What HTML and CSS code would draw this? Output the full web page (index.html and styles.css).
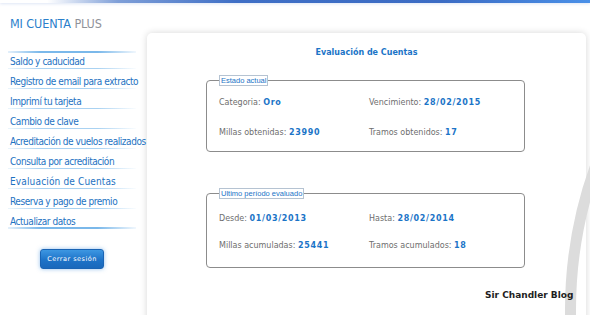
FILE: index.html
```html
<!DOCTYPE html>
<html lang="es">
<head>
<meta charset="utf-8">
<title>Mi Cuenta Plus</title>
<link rel="stylesheet" href="styles.css">
</head>
<body>
<div class="topbar"></div>
<div class="layout">
  <aside class="sidebar">
    <h1 class="brand"><span class="brand-main">MI CUENTA</span> <span class="brand-plus">PLUS</span></h1>
    <ul class="menu">
      <li class="menu-item">Saldo y caducidad</li>
      <li class="menu-item">Registro de email para extracto</li>
      <li class="menu-item">Imprimí tu tarjeta</li>
      <li class="menu-item">Cambio de clave</li>
      <li class="menu-item">Acreditación de vuelos realizados</li>
      <li class="menu-item">Consulta por acreditación</li>
      <li class="menu-item active">Evaluación de Cuentas</li>
      <li class="menu-item">Reserva y pago de premio</li>
      <li class="menu-item last">Actualizar datos</li>
    </ul>
    <div class="logout-wrap"><button class="logout">Cerrar sesión</button></div>
  </aside>
  <main class="panel">
    <h2 class="panel-title">Evaluación de Cuentas</h2>
    <fieldset class="box">
      <legend class="box-legend">Estado actual</legend>
      <div class="grid">
        <div class="cell">Categoria: <b class="val">Oro</b></div>
        <div class="cell">Vencimiento: <b class="val">28/02/2015</b></div>
        <div class="cell">Millas obtenidas: <b class="val">23990</b></div>
        <div class="cell">Tramos obtenidos: <b class="val">17</b></div>
      </div>
    </fieldset>
    <fieldset class="box box-second">
      <legend class="box-legend">Ultimo período evaluado</legend>
      <div class="grid">
        <div class="cell">Desde: <b class="val">01/03/2013</b></div>
        <div class="cell">Hasta: <b class="val">28/02/2014</b></div>
        <div class="cell">Millas acumuladas: <b class="val">25441</b></div>
        <div class="cell">Tramos acumulados: <b class="val">18</b></div>
      </div>
    </fieldset>
  </main>
</div>
<svg class="ring" width="40" height="160" viewBox="0 0 40 160" aria-hidden="true">
  <circle cx="447" cy="150" r="426.5" fill="none" stroke="#dcdcdc" stroke-width="11"/>
</svg>
<div class="watermark">Sir Chandler Blog</div>
</body>
</html>
```

FILE: styles.css
```css
* { box-sizing: border-box; }
html, body { margin: 0; padding: 0; background: #fff; overflow: hidden; }
body { width: 590px; height: 315px; position: relative; }

.topbar {
  height: 3px;
  background: linear-gradient(to right, rgba(255,255,255,0) 8%, #7f9fd8 20%, #3f6fc6 40%, #3c6cc4 75%, #4a90e8 100%);
  box-shadow: 0 1px 3px rgba(70,110,200,0.18);
}

.layout { display: flex; align-items: flex-start; }

.sidebar { width: 140px; padding: 13px 0 0 0; flex: none; }

.brand {
  margin: 0 0 0 10px;
  font: normal 12.5px/16px "DejaVu Sans Condensed", "DejaVu Sans", sans-serif;
  letter-spacing: -0.1px;
}
.brand-main { color: #2b7fcb; }
.brand-plus { color: #8f9299; }

.menu { list-style: none; margin: 17px 0 0 0; padding: 0; position: relative; }
.menu::before {
  content: "";
  position: absolute; left: 8px; top: 2px; width: 128px; height: 2px;
  background: linear-gradient(to right, rgba(120,180,235,0.2), #7ab8ea 25%, #7ab8ea 70%, rgba(120,180,235,0.1));
}
.menu-item {
  position: relative;
  height: 20px;
  padding: 6px 0 0 10px;
  font: 10px/14px "DejaVu Sans Condensed", "DejaVu Sans", sans-serif;
  letter-spacing: -0.45px;
  color: #1d72c2;
  white-space: nowrap;
}
.menu-item:first-child { margin-top: 3px; }
.menu-item::after {
  content: "";
  position: absolute; left: 8px; bottom: 0; width: 128px; height: 1px;
  background: linear-gradient(to right, rgba(160,205,240,0.2), #a9d2f2 25%, #a9d2f2 70%, rgba(160,205,240,0.05));
}
.menu-item.last::after {
  height: 2px;
  background: linear-gradient(to right, rgba(120,180,235,0.2), #7ab8ea 25%, #7ab8ea 70%, rgba(120,180,235,0.1));
}
.menu-item.active { letter-spacing: 0.15px; }

.logout-wrap { padding: 18px 0 0 40px; }
.logout {
  width: 64px; height: 20px;
  padding: 0;
  border: 1px solid #1a64b4;
  border-radius: 3px;
  background: linear-gradient(#3d97e2, #1e73c8 55%, #1a68bb);
  color: #fff;
  font: 6.5px/18px "DejaVu Sans", sans-serif;
  letter-spacing: 0.5px;
  box-shadow: 0 0 4px rgba(60,140,220,0.55);
}

.panel {
  margin: 30px 0 0 7px;
  width: 439px;
  height: 300px;
  background: #fff;
  border-radius: 5px 5px 0 0;
  box-shadow: 0 0 7px rgba(0,0,0,0.16);
  padding-top: 15px;
  flex: none;
}
.panel-title {
  margin: 0 0 17px 0;
  text-align: center;
  font: bold 8px/10px "DejaVu Sans", sans-serif;
  color: #1b74c7;
}

.box {
  width: 319px;
  margin: 0 0 0 59px;
  border: 1px solid #8c8c8c;
  border-radius: 4px;
  padding: 11px 11px 12px 12px;
  min-width: 0;
}
.box-second { margin-top: 36px; padding-top: 14px; padding-bottom: 15px; }
.box-legend {
  padding: 0 1px;
  border: 1px solid #b5c3d2;
  color: #1b74c7;
  font: 7.5px/9px "Liberation Sans", Arial, sans-serif;
}
.grid {
  display: grid;
  grid-template-columns: 150px 1fr;
  row-gap: 18px;
}
.box-second .grid { row-gap: 15px; }
.cell {
  font: 8px/12px "DejaVu Sans", sans-serif;
  color: #6e6e6e;
  white-space: nowrap;
}
.val { color: #1b74c7; font-weight: bold; letter-spacing: 0.7px; }

.ring { position: absolute; left: 550px; top: 160px; }
.watermark {
  position: absolute; left: 485px; top: 289px;
  font: bold 9px/12px "DejaVu Sans", sans-serif;
  color: #1e1e1e;
}
```
